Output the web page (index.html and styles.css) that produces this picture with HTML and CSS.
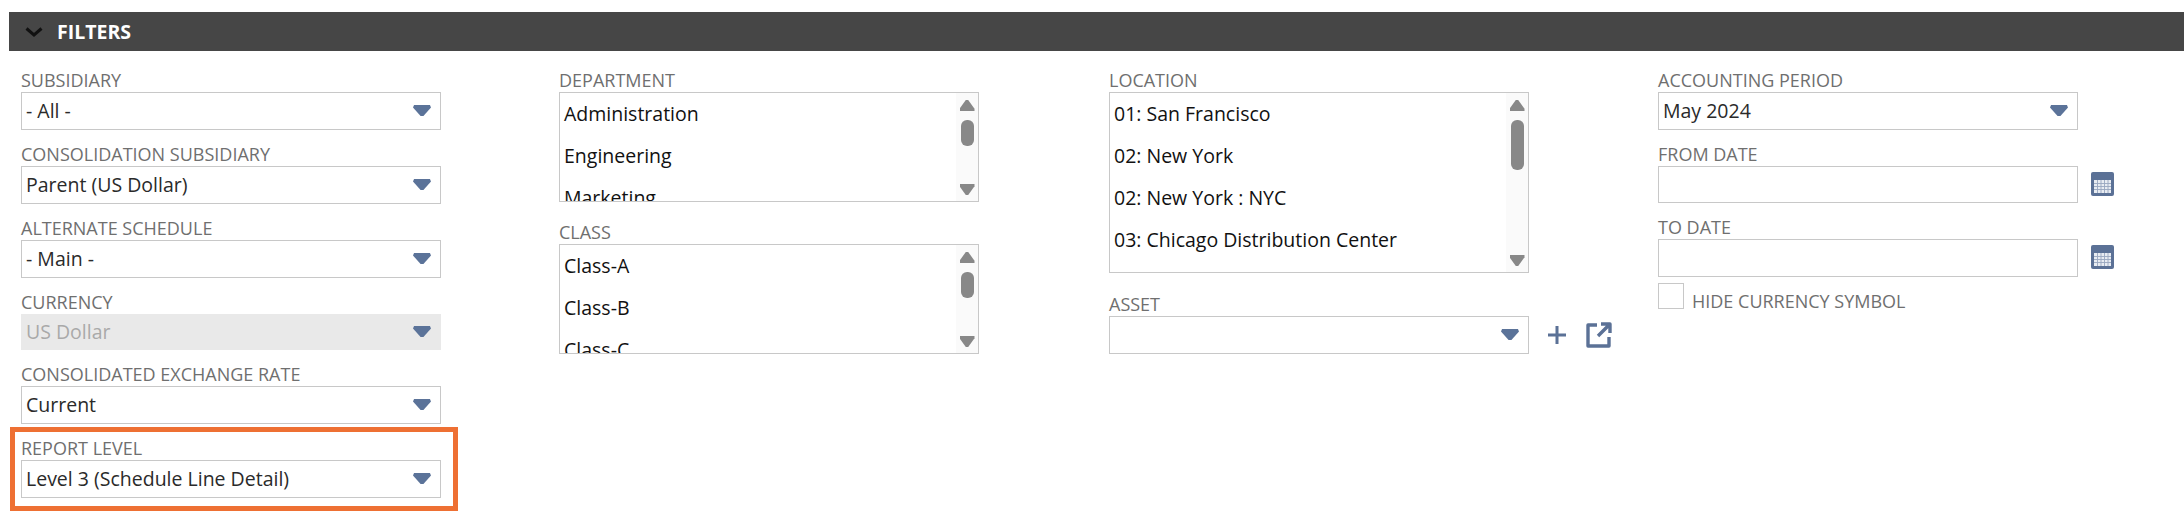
FILE: index.html
```html
<!DOCTYPE html>
<html lang="en">
<head>
  <meta charset="UTF-8">
  <title>Filters</title>
  <link rel="stylesheet" href="styles.css">
</head>
<body>
  <div class="section-header">
    <svg class="chevron" width="18" height="10" viewBox="0 0 18 10"><path d="M1.5 1.5 L9 8 L16.5 1.5" fill="none" stroke="#111" stroke-width="3"/></svg>
    <span class="section-title">FILTERS</span>
  </div>

  <div class="filters">
    <!-- first column -->
    <div class="column">
      <div class="field">
        <div class="field-label">SUBSIDIARY</div>
        <div class="select"><span>- All -</span><i class="arrow"></i></div>
      </div>
      <div class="field">
        <div class="field-label">CONSOLIDATION SUBSIDIARY</div>
        <div class="select"><span>Parent (US Dollar)</span><i class="arrow"></i></div>
      </div>
      <div class="field">
        <div class="field-label">ALTERNATE SCHEDULE</div>
        <div class="select"><span>- Main -</span><i class="arrow"></i></div>
      </div>
      <div class="field">
        <div class="field-label">CURRENCY</div>
        <div class="select disabled"><span>US Dollar</span><i class="arrow"></i></div>
      </div>
      <div class="field">
        <div class="field-label">CONSOLIDATED EXCHANGE RATE</div>
        <div class="select"><span>Current</span><i class="arrow"></i></div>
      </div>
      <div class="field highlight">
        <div class="field-label">REPORT LEVEL</div>
        <div class="select"><span>Level 3 (Schedule Line Detail)</span><i class="arrow"></i></div>
      </div>
    </div>

    <!-- second column -->
    <div class="column">
      <div class="field list-field">
        <div class="field-label">DEPARTMENT</div>
        <div class="listbox">
          <div class="list-items">
            <div class="list-item">Administration</div>
            <div class="list-item">Engineering</div>
            <div class="list-item">Marketing</div>
          </div>
          <div class="scrollbar">
            <i class="scroll-up"></i>
            <i class="thumb"></i>
            <i class="scroll-down"></i>
          </div>
        </div>
      </div>
      <div class="field list-field">
        <div class="field-label">CLASS</div>
        <div class="listbox">
          <div class="list-items">
            <div class="list-item">Class-A</div>
            <div class="list-item">Class-B</div>
            <div class="list-item">Class-C</div>
          </div>
          <div class="scrollbar">
            <i class="scroll-up"></i>
            <i class="thumb"></i>
            <i class="scroll-down"></i>
          </div>
        </div>
      </div>
    </div>

    <!-- third column -->
    <div class="column">
      <div class="field list-field location">
        <div class="field-label">LOCATION</div>
        <div class="listbox tall">
          <div class="list-items">
            <div class="list-item">01: San Francisco</div>
            <div class="list-item">02: New York</div>
            <div class="list-item">02: New York : NYC</div>
            <div class="list-item">03: Chicago Distribution Center</div>
          </div>
          <div class="scrollbar">
            <i class="scroll-up"></i>
            <i class="thumb long"></i>
            <i class="scroll-down"></i>
          </div>
        </div>
      </div>
      <div class="field">
        <div class="field-label">ASSET</div>
        <div class="field-row">
          <div class="select"><span></span><i class="arrow"></i></div>
          <svg class="add-icon" width="20" height="20" viewBox="0 0 20 20"><path d="M10 1 V19 M1 10 H19" fill="none" stroke="#5b7196" stroke-width="3"/></svg>
          <svg class="open-icon" width="26" height="26" viewBox="0 0 26 26"><path d="M11 3 H2 V24 H23 V15 M15 2 H24 V11 M23.5 2.5 L12 14" fill="none" stroke="#5b7196" stroke-width="3.4" stroke-linejoin="round"/></svg>
        </div>
      </div>
    </div>

    <!-- fourth column -->
    <div class="column">
      <div class="field">
        <div class="field-label">ACCOUNTING PERIOD</div>
        <div class="select"><span>May 2024</span><i class="arrow"></i></div>
      </div>
      <div class="field">
        <div class="field-label">FROM DATE</div>
        <div class="field-row">
          <div class="text-input short"></div>
          <svg class="calendar" width="23" height="24" viewBox="0 0 23 24"><rect width="23" height="24" rx="2" fill="#5b7196"/><path d="M3 8 H20 V21 H3 Z" fill="#e8ecf2"/><path d="M3 11.5 H20 M3 14.5 H20 M3 17.5 H20 M6.5 8 V21 M10 8 V21 M13.5 8 V21 M17 8 V21" stroke="#98a7bf" stroke-width="0.9"/></svg>
        </div>
      </div>
      <div class="field">
        <div class="field-label">TO DATE</div>
        <div class="field-row">
          <div class="text-input"></div>
          <svg class="calendar" width="23" height="24" viewBox="0 0 23 24"><rect width="23" height="24" rx="2" fill="#5b7196"/><path d="M3 8 H20 V21 H3 Z" fill="#e8ecf2"/><path d="M3 11.5 H20 M3 14.5 H20 M3 17.5 H20 M6.5 8 V21 M10 8 V21 M13.5 8 V21 M17 8 V21" stroke="#98a7bf" stroke-width="0.9"/></svg>
        </div>
      </div>
      <div class="checkbox-row">
        <span class="checkbox"></span>
        <span class="field-label">HIDE CURRENCY SYMBOL</span>
      </div>
    </div>
  </div>
</body>
</html>
```

FILE: styles.css
```css
body {
  margin: 0;
  height: 512px;
  overflow: hidden;
  background: #fff;
  font-family: "Open Sans", sans-serif;
  color: #2a2a2a;
}

.section-header {
  display: flex;
  align-items: center;
  height: 39px;
  margin: 12px 0 0 9px;
  padding-left: 16px;
  background: #464646;
}

.chevron {
  margin-right: 14px;
}

.section-title {
  font-size: 19.5px;
  font-weight: 700;
  color: #fff;
}

.filters {
  display: grid;
  grid-template-columns: 538px 550px 549px 1fr;
  padding: 17px 0 0 21px;
}

.field {
  margin-bottom: 12px;
}

.field-label {
  height: 24px;
  line-height: 25px;
  font-size: 18px;
  color: #6f6f6f;
}

.field-row {
  display: flex;
  align-items: center;
}

.select,
.text-input {
  box-sizing: border-box;
  display: flex;
  align-items: center;
  justify-content: space-between;
  flex: none;
  width: 420px;
  height: 38px;
  padding: 0 9px 2px 4px;
  background: #fff;
  border: 1px solid #c8c8c8;
  font-size: 19.5px;
}

.text-input.short {
  height: 37px;
}

.select.disabled {
  height: 36px;
  background: #e9e9e9;
  border-color: #e9e9e9;
  color: #a9a9a9;
}

.arrow {
  width: 18px;
  height: 11px;
  margin-top: 1px;
  background: #5b7399;
  clip-path: polygon(6% 0, 94% 0, 100% 22%, 58% 100%, 42% 100%, 0 22%);
}

.highlight {
  width: 420px;
  margin: -9px 0 0 -11px;
  padding: 4px 12px 8px 6px;
  border: 5px solid #ee7033;
}

.list-field {
  margin-bottom: 18px;
}

.location {
  margin-bottom: 19px;
}

.listbox {
  box-sizing: border-box;
  display: flex;
  justify-content: space-between;
  width: 420px;
  height: 110px;
  overflow: hidden;
  border: 1px solid #c8c8c8;
}

.listbox.tall {
  height: 181px;
}

.list-items {
  padding-left: 4px;
  font-size: 19.5px;
  color: #111;
}

.list-item {
  height: 42px;
  line-height: 42px;
}

.scrollbar {
  display: flex;
  flex-direction: column;
  align-items: center;
  width: 22px;
  padding-top: 7px;
  background: #fafafa;
}

.scroll-up,
.scroll-down {
  width: 15px;
  height: 11px;
  background: #888;
}

.scroll-up {
  clip-path: polygon(42% 0, 58% 0, 100% 80%, 100% 100%, 0 100%, 0 80%);
}

.thumb {
  width: 13px;
  height: 26px;
  margin-top: 9px;
  border-radius: 6px;
  background: #888;
}

.thumb.long {
  height: 50px;
}

.scroll-down {
  margin-top: auto;
  margin-bottom: 6px;
  clip-path: polygon(0 0, 100% 0, 100% 20%, 58% 100%, 42% 100%, 0 20%);
}

.add-icon {
  margin-left: 18px;
}

.open-icon {
  margin-left: 19px;
}

.calendar {
  margin: -2px 0 0 13px;
}

.checkbox-row {
  display: flex;
  align-items: flex-start;
  margin-top: -6px;
}

.checkbox {
  box-sizing: border-box;
  width: 26px;
  height: 26px;
  margin-right: 8px;
  border: 1px solid #c8c8c8;
}

.checkbox-row .field-label {
  margin-top: 6px;
}
```
